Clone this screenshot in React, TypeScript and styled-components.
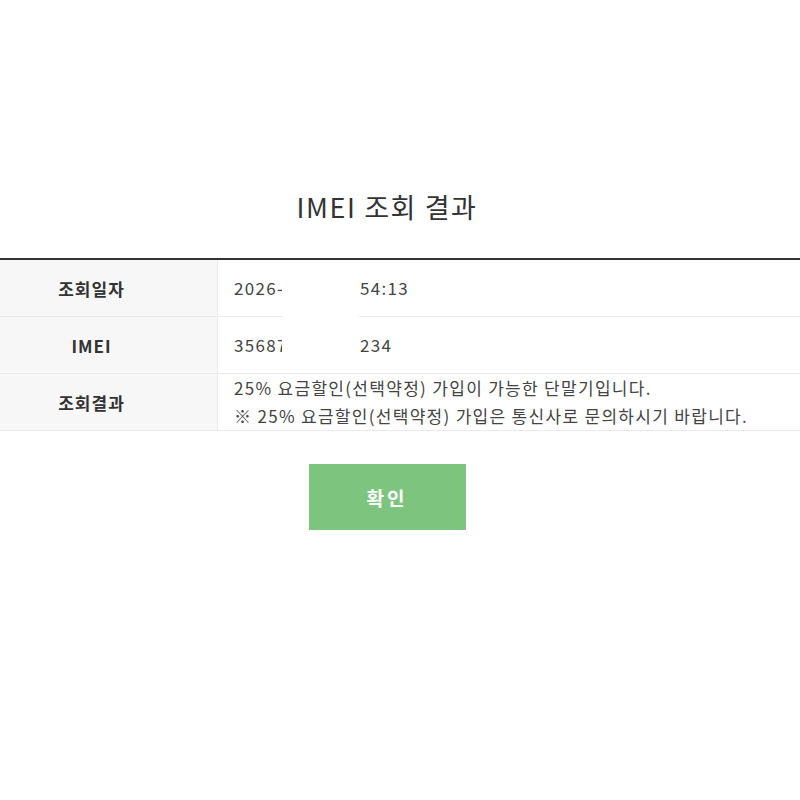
import * as React from "react";
import styled, { createGlobalStyle } from "styled-components";

const GlobalStyle = createGlobalStyle`
  html, body {
    margin: 0;
    padding: 0;
    background: #fff;
  }
  body {
    font-family: "Noto Sans CJK KR", "Noto Sans", sans-serif;
    color: #333;
  }
`;

const Page = styled.div`
  width: 800px;
  padding-top: 186px;
  overflow: hidden;
`;

const Title = styled.h2`
  margin: 0 0 30px;
  padding-right: 26px;
  text-align: center;
  font-size: 27px;
  font-weight: 400;
  letter-spacing: 1.6px;
  line-height: 42px;
  color: #333;
`;

const Table = styled.div`
  position: relative;
  margin-left: -34px;
  width: 860px;
  border-top: 2px solid #333;
`;

const Row = styled.div`
  display: grid;
  grid-template-columns: 252px 1fr;
  height: 56px;
  border-bottom: 1px solid #eaeaea;
`;

const Label = styled.div`
  display: flex;
  align-items: center;
  justify-content: center;
  background: #f7f7f7;
  border-right: 1px solid #eaeaea;
  font-size: 17px;
  font-weight: 700;
  letter-spacing: 1px;
  color: #333;
`;

const Value = styled.div`
  display: flex;
  flex-direction: column;
  justify-content: center;
  padding-left: 16px;
  font-size: 17px;
  letter-spacing: 1.3px;
  line-height: 28px;
  color: #444;
`;

const Line = styled.div`
  display: flex;
  white-space: nowrap;
`;

const Hidden = styled.span`
  width: 126px;
`;

const Mask = styled.div`
  position: absolute;
  left: 316px;
  top: 2px;
  width: 77px;
  height: 106px;
  background: #fff;
`;

const ButtonBar = styled.div`
  display: flex;
  justify-content: center;
  padding: 33px 26px 0 0;
`;

const Confirm = styled.button`
  width: 157px;
  height: 66px;
  border: none;
  background: #7dc57f;
  color: #fff;
  font-family: inherit;
  font-size: 19px;
  font-weight: 700;
  letter-spacing: 3px;
  padding-left: 6px;
  cursor: pointer;
`;

export default function App() {
  return (
    <>
      <GlobalStyle />
      <Page>
        <Title>IMEI 조회 결과</Title>
        <Table>
          <Row>
            <Label>조회일자</Label>
            <Value>
              <Line>
                <Hidden>2026-01-01</Hidden>
                <span>54:13</span>
              </Line>
            </Value>
          </Row>
          <Row>
            <Label>IMEI</Label>
            <Value>
              <Line>
                <Hidden>3568712345</Hidden>
                <span>234</span>
              </Line>
            </Value>
          </Row>
          <Row>
            <Label>조회결과</Label>
            <Value>
              <span>25% 요금할인(선택약정) 가입이 가능한 단말기입니다.</span>
              <span>※ 25% 요금할인(선택약정) 가입은 통신사로 문의하시기 바랍니다.</span>
            </Value>
          </Row>
          <Mask />
        </Table>
        <ButtonBar>
          <Confirm>확인</Confirm>
        </ButtonBar>
      </Page>
    </>
  );
}
